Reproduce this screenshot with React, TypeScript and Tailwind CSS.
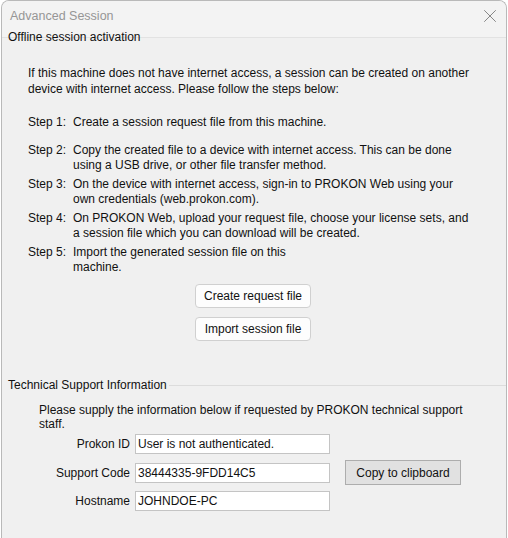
import { X } from "lucide-react";

const steps = [
  { n: "Step 1:", text: ["Create a session request file from this machine."], mt: "mt-[18px]" },
  {
    n: "Step 2:",
    text: [
      "Copy the created file to a device with internet access. This can be done",
      "using a USB drive, or other file transfer method.",
    ],
    mt: "mt-[13px]",
  },
  {
    n: "Step 3:",
    text: [
      "On the device with internet access, sign-in to PROKON Web using your",
      "own credentials (web.prokon.com).",
    ],
    mt: "mt-[4px]",
  },
  {
    n: "Step 4:",
    text: [
      "On PROKON Web, upload your request file, choose your license sets, and",
      "a session file which you can download will be created.",
    ],
    mt: "mt-[4px]",
  },
  { n: "Step 5:", text: ["Import the generated session file on this", "machine."], mt: "mt-[4px]" },
];

function Field({ label, value }: { label: string; value: string }) {
  return (
    <div className="flex items-center h-[20px]">
      <div className="w-[130px] text-right pr-[5px]">{label}</div>
      <div className="w-[195px] h-[20px] bg-white border border-[#c4c4c4] pl-[2px] leading-[18px]">
        {value}
      </div>
    </div>
  );
}

export default function App() {
  return (
    <div className="w-[508px] h-[538px] bg-white overflow-hidden">
      <div
        className="ml-px w-[506px] h-[538px] bg-[#f0f0f0] border-x border-t border-[#b9b9b9] rounded-t-[8px] overflow-hidden text-[12px] text-[#111]"
        style={{ fontFamily: '"Liberation Sans", Arial, sans-serif' }}
      >
        {/* title bar */}
        <div className="h-[37px] bg-[#f3f3f3] border-b border-[#e2e2e2] flex items-start justify-between">
          <div className="pl-[8px] pt-[6px] text-[12.5px] text-[#969696]">Advanced Session</div>
          <X className="mt-[4px] mr-[5px] w-[22px] h-[22px] text-[#707070]" strokeWidth={0.9} />
        </div>

        <div className="-mt-[9px] pl-[6px] leading-[16px]">Offline session activation</div>

        {/* offline group */}
        <div className="pl-[26px]">
          <p className="mt-[20px] leading-[16px]">
            If this machine does not have internet access, a session can be created on another
            <br />
            device with internet access. Please follow the steps below:
          </p>
          {steps.map((s) => (
            <div key={s.n} className={`flex leading-[15px] ${s.mt}`}>
              <div className="w-[45px] shrink-0">{s.n}</div>
              <div>
                {s.text.map((t) => (
                  <div key={t}>{t}</div>
                ))}
              </div>
            </div>
          ))}
        </div>

        <div className="mt-[9px] flex flex-col items-start pl-[193px] gap-[9px]">
          <button className="w-[116px] h-[24px] bg-[#fdfdfd] border border-[#d0d0d0] rounded-[4px]">
            Create request file
          </button>
          <button className="w-[116px] h-[24px] bg-[#fdfdfd] border border-[#d0d0d0] rounded-[4px]">
            Import session file
          </button>
        </div>

        {/* technical support group */}
        <div className="mt-[36px] flex items-center h-[16px]">
          <div className="pl-[6px] pr-[2px] whitespace-nowrap">Technical Support Information</div>
          <div className="flex-1 border-t border-[#dcdcdc]" />
        </div>

        <p className="mt-[10px] pl-[37px] leading-[14px]">
          Please supply the information below if requested by PROKON technical support
          <br />
          staff.
        </p>

        <div className="mt-[3px] flex flex-col gap-[8.5px] pl-[3px]">
          <Field label="Prokon ID" value="User is not authenticated." />
          <div className="flex items-center h-[20px]">
            <Field label="Support Code" value="38444335-9FDD14C5" />
            <button className="ml-[15px] w-[116px] h-[25px] bg-[#e1e1e1] border border-[#adadad]">
              Copy to clipboard
            </button>
          </div>
          <Field label="Hostname" value="JOHNDOE-PC" />
        </div>
      </div>
    </div>
  );
}
